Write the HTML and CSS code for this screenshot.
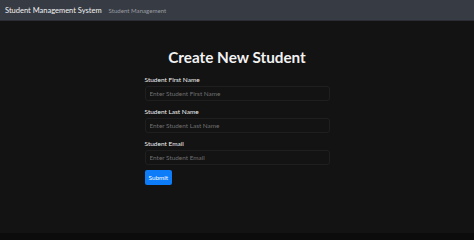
FILE: index.html
```html
<!DOCTYPE html>
<html lang="en">

<head>
    <meta charset="UTF-8">
    <meta name="viewport" content="width=device-width, initial-scale=1.0">
    <title>Student Management System</title>
    <link rel="stylesheet" href="styles.css">
</head>

<body>
    <nav class="navbar">
        <a class="brand" href="#">Student Management System</a>
        <a class="nav-link" href="#">Student Management</a>
    </nav>

    <div class="page">
        <div class="form-box">
            <h1>Create New Student</h1>
            <form>
                <div class="field">
                    <label for="firstName">Student First Name</label>
                    <input type="text" id="firstName" placeholder="Enter Student First Name">
                </div>
                <div class="field">
                    <label for="lastName">Student Last Name</label>
                    <input type="text" id="lastName" placeholder="Enter Student Last Name">
                </div>
                <div class="field">
                    <label for="email">Student Email</label>
                    <input type="text" id="email" placeholder="Enter Student Email">
                </div>
                <button type="submit">Submit</button>
            </form>
        </div>
    </div>
    <div class="footer"></div>
</body>

</html>
```
FILE: styles.css
```css
body {
    font-family: Lato, "Noto Sans", sans-serif;
    background-color: #131313;
    margin: 0;
    padding: 0;
    height: 240px;
    display: flex;
    flex-direction: column;
}

.navbar {
    height: 20px;
    background-color: #373b43;
    display: flex;
    align-items: center;
    padding: 0 5px;
    gap: 7px;
    border-bottom: 1px solid #2a2d33;
}

.navbar a {
    text-decoration: none;
}

.brand {
    color: #f2f2f2;
    font-size: 7.5px;
}

.nav-link {
    color: #9a9da2;
    font-size: 6.1px;
}

.page {
    flex: 1;
    display: flex;
    justify-content: center;
}

.form-box {
    width: 185px;
    padding-top: 26px;
}

h1 {
    color: #f2f2f2;
    text-align: center;
    font-size: 15.3px;
    font-weight: 700;
    margin: 0 0 9px 0;
    line-height: 20px;
}

.field {
    display: flex;
    flex-direction: column;
    gap: 2px;
    margin-bottom: 7px;
}

.field:last-of-type {
    margin-bottom: 5px;
}

label {
    color: #f0f0f0;
    font-size: 6.5px;
    line-height: 8px;
}

input {
    box-sizing: border-box;
    width: 100%;
    height: 15px;
    margin: 0;
    background-color: #131313;
    border: 1px solid #1f1f1f;
    border-radius: 3px;
    padding: 0 4px;
    font-family: inherit;
    font-size: 6.4px;
    color: #ddd;
}

input::placeholder {
    color: #6f6f6f;
}

button {
    display: block;
    background-color: #0d7cf8;
    color: white;
    border: none;
    border-radius: 2px;
    height: 15px;
    padding: 0 4px;
    font-family: inherit;
    font-size: 6.4px;
}

.footer {
    height: 7px;
    background-color: #0c0c0c;
}
```
